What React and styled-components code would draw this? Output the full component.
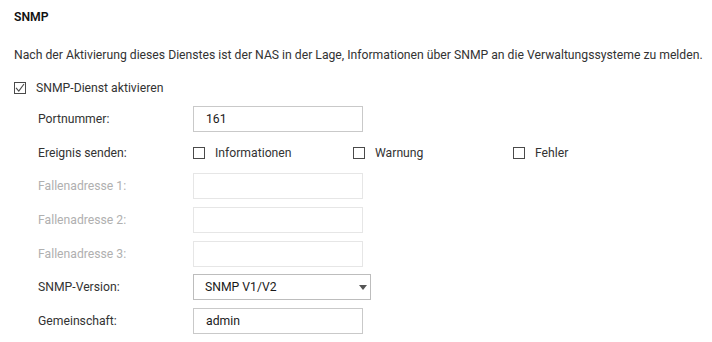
import React from 'react';
import styled, { createGlobalStyle } from 'styled-components';

const Global = createGlobalStyle`
  body {
    margin: 0;
    background: #fff;
    font-family: Roboto, 'Liberation Sans', sans-serif;
    font-size: 12.2px;
    color: #333;
  }
`;

const Page = styled.div`
  padding: 9px 14px 0;
`;

const Title = styled.div`
  font-weight: 600;
  font-size: 12.2px;
  line-height: 16px;
  color: #111;
`;

const Desc = styled.p`
  margin: 22px 0 0;
  line-height: 16px;
  color: #333;
  white-space: nowrap;
`;

const CheckRow = styled.label`
  display: flex;
  align-items: center;
  gap: 10px;
  height: 16px;
  color: #333;
  white-space: nowrap;
`;

const EnableRow = styled(CheckRow)`
  margin-top: 17px;
`;

const Box = styled.span`
  box-sizing: border-box;
  width: 12px;
  height: 12px;
  border: 1.5px solid #4a4a4a;
  display: flex;
  align-items: center;
  justify-content: center;
  flex-shrink: 0;
  svg { display: block; }
`;

const Form = styled.div`
  display: grid;
  grid-template-columns: 155px auto;
  grid-auto-rows: 26px;
  row-gap: 7.7px;
  align-items: center;
  margin: 10px 0 0 24px;
`;

const Label = styled.div`
  color: ${p => (p.$disabled ? '#b0b0b0' : '#333')};
  white-space: nowrap;
`;

const Input = styled.div`
  box-sizing: border-box;
  width: 170px;
  height: 26px;
  border: 1px solid ${p => (p.$disabled ? '#e6e6e6' : '#c9c9c9')};
  padding: 0 12px;
  display: flex;
  align-items: center;
  color: #1a1a1a;
`;

const Select = styled(Input)`
  width: 178px;
  padding: 0 11px;
  justify-content: space-between;
  border-color: #bdbdbd;
`;

const Arrow = styled.span`
  width: 0;
  height: 0;
  border-left: 4px solid transparent;
  border-right: 4px solid transparent;
  border-top: 5px solid #555;
  margin-right: -8px;
`;

const Events = styled.div`
  display: grid;
  grid-template-columns: repeat(3, 160px);
`;

function Tick() {
  return (
    <svg width="10" height="10" viewBox="0 0 10 10">
      <path d="M1 4.8 L3.8 8 L9 1" fill="none" stroke="#4a4a4a" strokeWidth="1.1" />
    </svg>
  );
}

function Check({ checked, children }) {
  return (
    <CheckRow>
      <Box>{checked && <Tick />}</Box>
      {children}
    </CheckRow>
  );
}

export default function App() {
  return (
    <>
      <Global />
      <Page>
        <Title>SNMP</Title>
        <Desc>
          Nach der Aktivierung dieses Dienstes ist der NAS in der Lage, Informationen über SNMP an die Verwaltungssysteme zu melden.
        </Desc>
        <EnableRow>
          <Box><Tick /></Box>
          SNMP-Dienst aktivieren
        </EnableRow>
        <Form>
          <Label>Portnummer:</Label>
          <Input>161</Input>

          <Label>Ereignis senden:</Label>
          <Events>
            <Check>Informationen</Check>
            <Check>Warnung</Check>
            <Check>Fehler</Check>
          </Events>

          <Label $disabled>Fallenadresse 1:</Label>
          <Input $disabled />
          <Label $disabled>Fallenadresse 2:</Label>
          <Input $disabled />
          <Label $disabled>Fallenadresse 3:</Label>
          <Input $disabled />

          <Label>SNMP-Version:</Label>
          <Select>
            SNMP V1/V2
            <Arrow />
          </Select>

          <Label>Gemeinschaft:</Label>
          <Input>admin</Input>
        </Form>
      </Page>
    </>
  );
}
